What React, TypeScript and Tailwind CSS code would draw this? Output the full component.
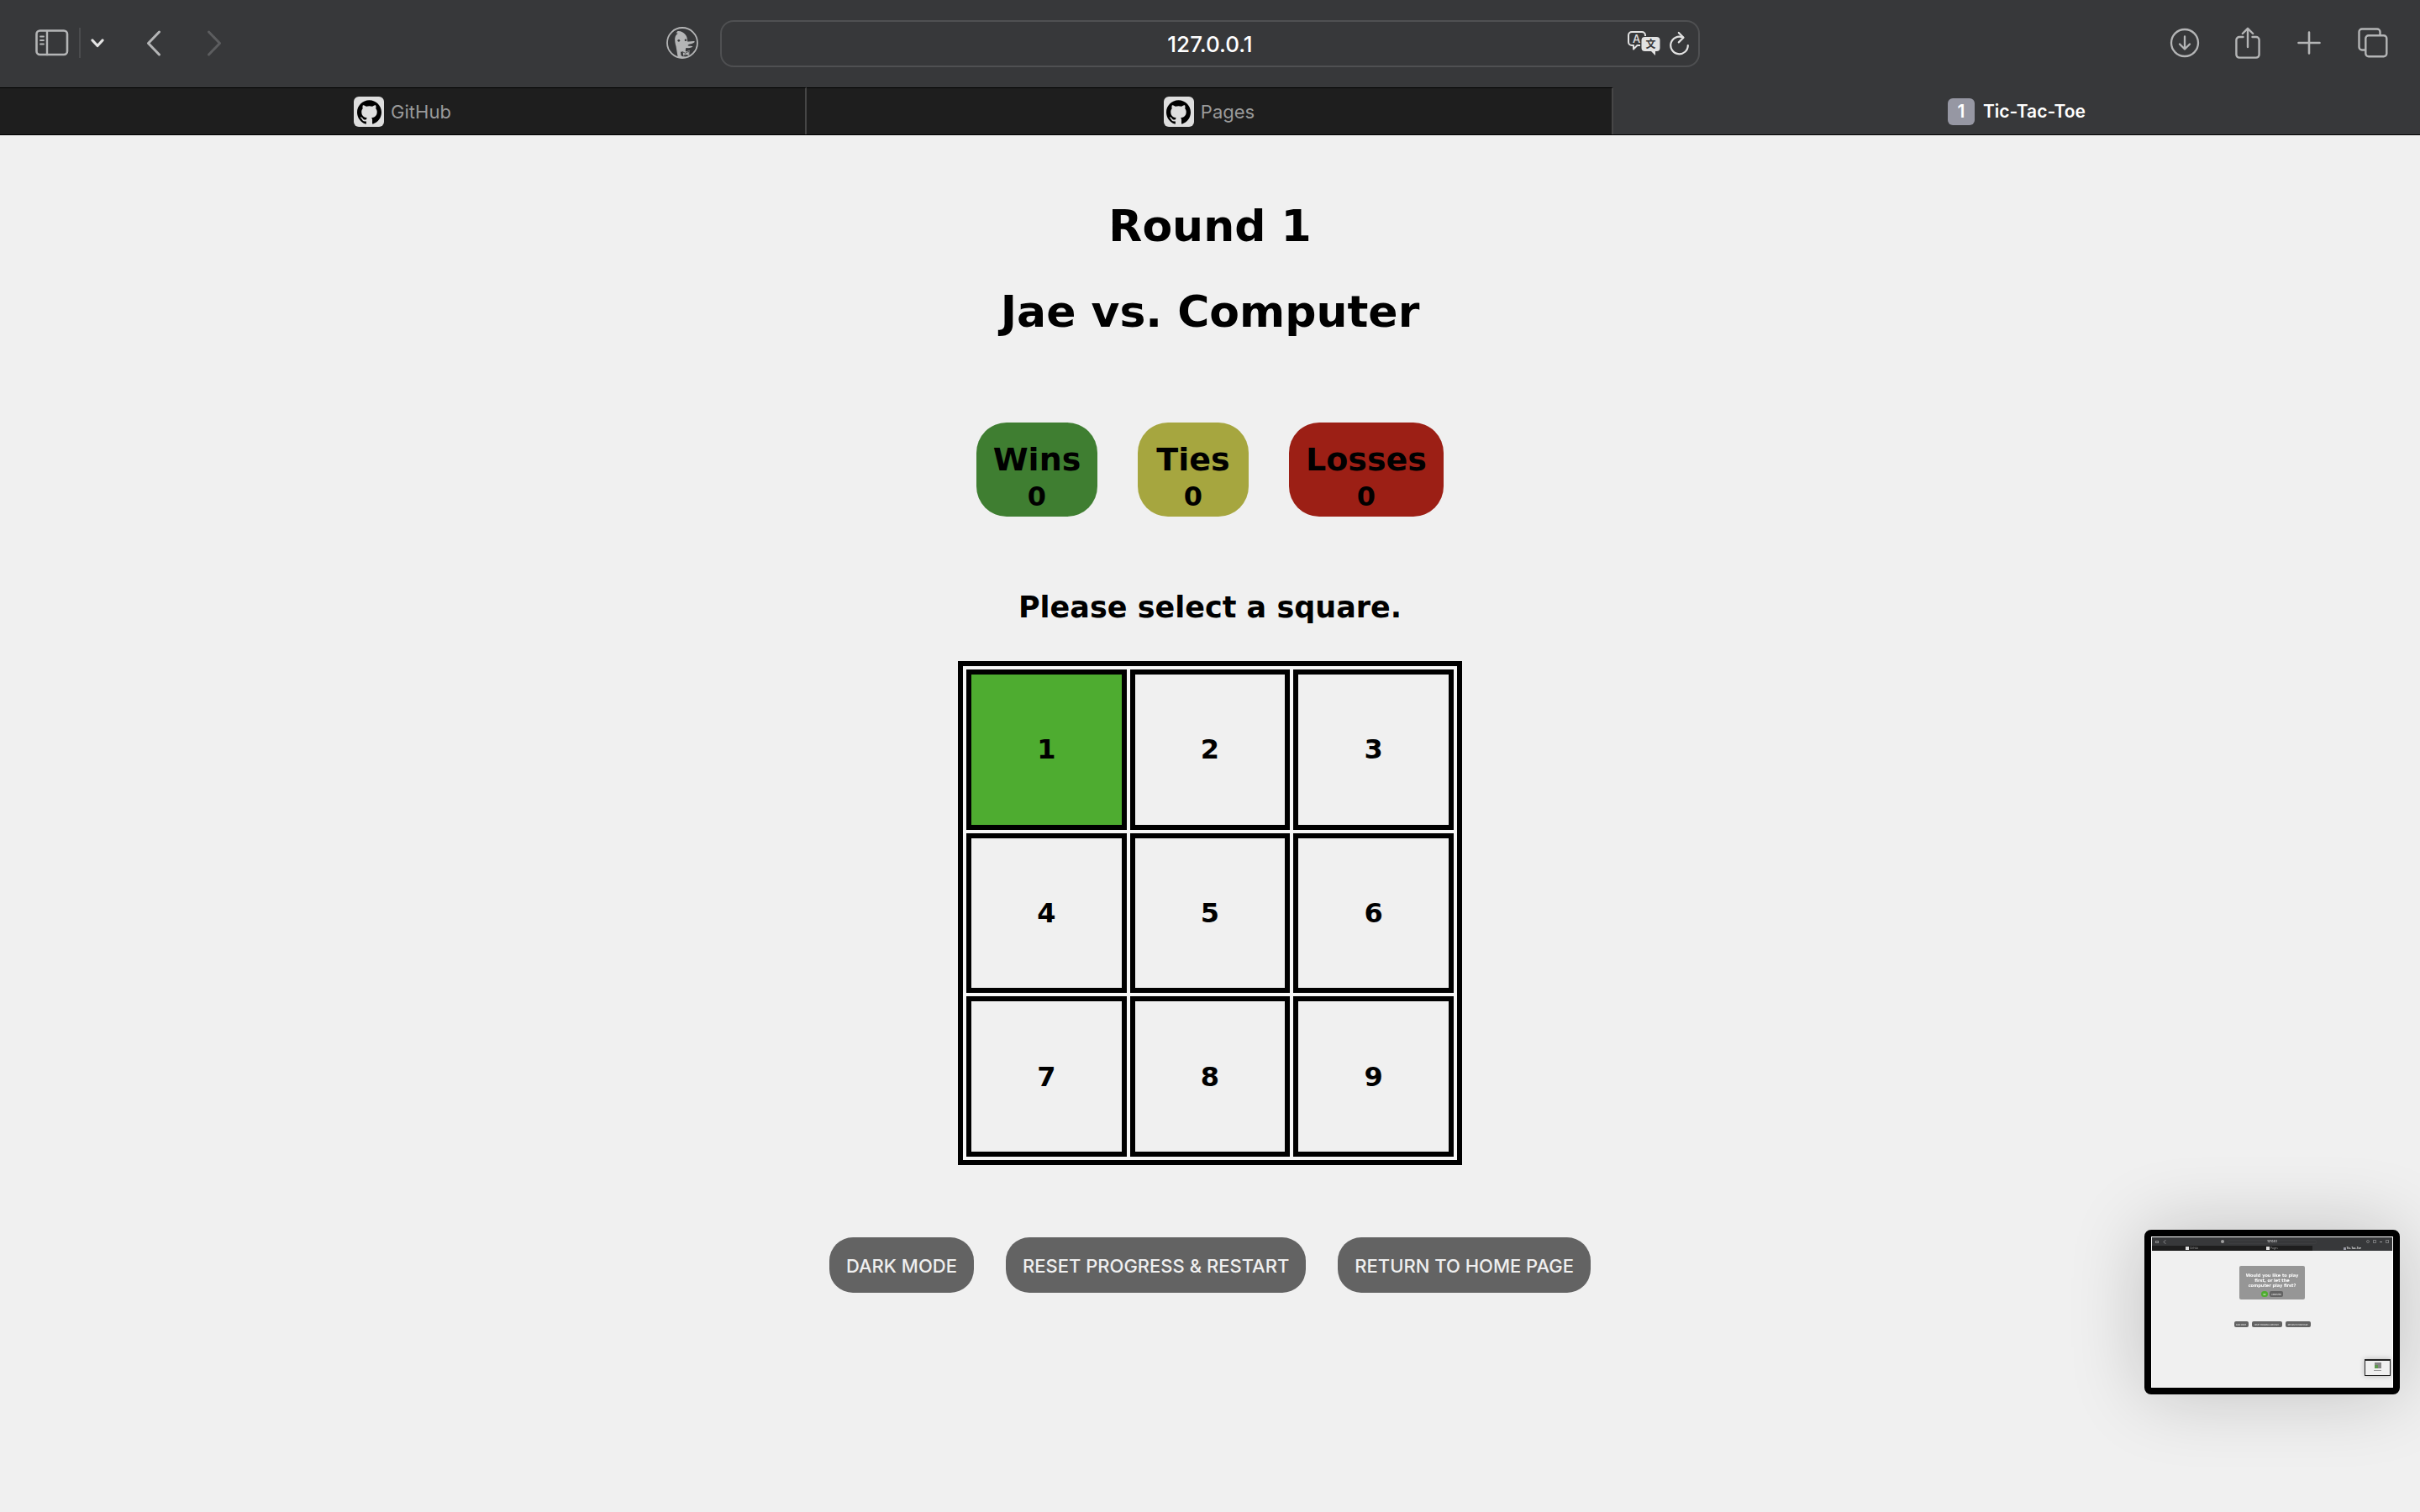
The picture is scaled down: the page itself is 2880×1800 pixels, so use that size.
import type { ReactNode } from "react";
import { SiGithub } from "react-icons/si";

const FONT_UI = "font-['Inter','Roboto',sans-serif]";
const FONT_GAME = "font-['DejaVu_Sans',sans-serif]";

function SidebarIcon() {
  return (
    <svg width="40" height="32" viewBox="0 0 40 32" fill="none" stroke="currentColor" strokeLinecap="round">
      <rect x="1.5" y="1.5" width="36.5" height="28.5" rx="4" strokeWidth="2.6" />
      <path d="M14 2v28" strokeWidth="2.4" />
      <path d="M6 8.5h4M6 13h4M6 17.500h4" strokeWidth="1.8" />
    </svg>
  );
}

function DuckIcon() {
  return (
    <svg width="38" height="38" viewBox="0 0 38 38" fill="none">
      <defs>
        <clipPath id="duck-clip">
          <circle cx="19" cy="19" r="18" />
        </clipPath>
      </defs>
      <g clipPath="url(#duck-clip)">
        <path
          d="M14 38 L11.500 23 C10 18 9.500 13 11.500 10 C12.500 8.500 13.500 8 14 8 C13 7.500 12 7.300 11.500 7.300 C12 6.400 13 6 13.500 6 C13 5.500 12.800 5.300 12.500 5.200 C17 4.600 20.500 6.500 22.500 9 C24.500 11 25 14 25.200 17.500 C28 18 31 16.800 33.500 17.200 C34.600 18.200 31.500 19.600 28 20.600 C26 21.200 25 22 26 22.600 C28 23.200 30 22.600 31.500 23.300 C31 24.800 27 25.500 23.500 25 C22.600 27 22.800 28.300 23 29.500 L27.500 28 L28 35 L23 33.500 L20 35 L19.500 30 L17 29.500 L18 38 Z"
          fill="currentColor"
        />
        <path d="M17 38 V34 C21 36 26 36.500 30 34 V38 Z" fill="currentColor" />
        <path d="M19 29.500l3.500 1.800 4.500-2.300.5 5.500-5-1.500-3 1.800z" stroke="#37383a" strokeWidth="0.8" />
      </g>
      <circle cx="14.800" cy="16.300" r="1.400" fill="#37383a" />
      <circle cx="23" cy="15.800" r="1.300" fill="#37383a" />
      <circle cx="19" cy="19" r="18" stroke="currentColor" strokeWidth="1.800" />
    </svg>
  );
}

function TranslateIcon() {
  return (
    <svg width="40" height="30" viewBox="0 0 40 30" fill="none">
      <path
        d="M15 17h-3.500L7 21.500V17H5a4 4 0 0 1-4-4V5a4 4 0 0 1 4-4h12a4 4 0 0 1 4 4v1"
        stroke="currentColor"
        strokeWidth="2"
        strokeLinejoin="round"
      />
      <text x="10.500" y="13.800" textAnchor="middle" fontSize="13" fontWeight="500" fontFamily="Inter, sans-serif" fill="currentColor">
        A
      </text>
      <path d="M20.500 7H34.500a4 4 0 0 1 4 4v9a4 4 0 0 1-4 4H33v5l-5-5h-7.500a4 4 0 0 1-4-4v-9a4 4 0 0 1 4-4z" fill="currentColor" />
      <text x="27.500" y="20" textAnchor="middle" fontSize="12" fontWeight="700" fontFamily="'Noto Sans CJK SC', sans-serif" fill="#37383a">
        文
      </text>
    </svg>
  );
}

function ReloadIcon() {
  return (
    <svg width="24" height="30" viewBox="0 0 24 30" fill="none" stroke="currentColor" strokeWidth="2.200" strokeLinecap="round" strokeLinejoin="round">
      <path d="M21.800 17A10.300 10.300 0 1 1 15.500 7.500" />
      <path d="M10.800 2l5.700 5.700-5.700 5.700" />
    </svg>
  );
}

function DownloadIcon() {
  return (
    <svg width="36" height="36" viewBox="0 0 36 36" fill="none" stroke="currentColor" strokeWidth="2.300" strokeLinecap="round" strokeLinejoin="round">
      <circle cx="18" cy="18" r="16" />
      <path d="M18 10.500v15M12 19.500l6 6 6-6" />
    </svg>
  );
}

function ShareIcon() {
  return (
    <svg width="30" height="38" viewBox="0 0 30 38" fill="none" stroke="currentColor" strokeWidth="2.400" strokeLinecap="round" strokeLinejoin="round">
      <path d="M9.500 12H5a3.600 3.600 0 0 0-3.600 3.600V33A3.600 3.600 0 0 0 5 36.600h20a3.600 3.600 0 0 0 3.600-3.600V15.600A3.600 3.600 0 0 0 25 12h-4.500" />
      <path d="M15 24V2M8.800 8L15 1.800 21.200 8" />
    </svg>
  );
}

function PlusIcon() {
  return (
    <svg width="28" height="28" viewBox="0 0 28 28" fill="none" stroke="currentColor" strokeWidth="2.600" strokeLinecap="round">
      <path d="M14 1.500v25M1.500 14h25" />
    </svg>
  );
}

function TabsIcon() {
  return (
    <svg width="36" height="36" viewBox="0 0 36 36" fill="none" stroke="currentColor" strokeWidth="2.400">
      <rect x="9.300" y="9.300" width="25" height="25" rx="3.500" />
      <path d="M9.300 26.500H5A3.500 3.500 0 0 1 1.500 23V5A3.500 3.500 0 0 1 5 1.500h18A3.500 3.500 0 0 1 26.500 5v4.300" />
    </svg>
  );
}

function Chevron({ d, width, height, stroke }: { d: string; width: number; height: number; stroke: number }) {
  return (
    <svg width={width} height={height} viewBox={`0 0 ${width} ${height}`} fill="none" stroke="currentColor" strokeWidth={stroke} strokeLinecap="round" strokeLinejoin="round">
      <path d={d} />
    </svg>
  );
}

function IconButton({ label, className = "", children }: { label: string; className?: string; children: ReactNode }) {
  return (
    <button type="button" aria-label={label} className={`shrink-0 ${className}`}>
      {children}
    </button>
  );
}

function Toolbar() {
  return (
    <div className="grid h-26 grid-cols-[857fr_1166fr_857fr] items-center text-[#b4b5b6]">
      <div className="flex items-center pb-[2px] pl-[42px]">
        <IconButton label="Show sidebar">
          <SidebarIcon />
        </IconButton>
        <span className="ml-3 h-9 w-[2px] bg-[#4b4c4e]" />
        <IconButton label="Sidebar menu" className="ml-3 text-[#e4e4e4]">
          <Chevron d="M2 2l6 6.500 6-6.500" width={16} height={11} stroke={3.2} />
        </IconButton>
        <IconButton label="Back" className="ml-[50px]">
          <Chevron d="M15.500 2L2.500 15.500l13 13.500" width={18} height={31} stroke={3} />
        </IconButton>
        <IconButton label="Forward" className="ml-[54px] text-[#5c5d5f]">
          <Chevron d="M2.500 2l13 13.500L2.500 29" width={18} height={31} stroke={3} />
        </IconButton>
        <IconButton label="Privacy report" className="mr-[26px] ml-auto">
          <DuckIcon />
        </IconButton>
      </div>
      <div className="relative h-14">
        <input
          aria-label="Address"
          defaultValue="127.0.0.1"
          className="h-full w-full rounded-2xl border-2 border-[#4f5052] bg-transparent text-center text-[26px] font-medium text-white outline-none"
        />
        <div className="absolute inset-y-0 right-3 flex items-center gap-[10px] text-[#e2e2e2]">
          <IconButton label="Translate">
            <TranslateIcon />
          </IconButton>
          <IconButton label="Reload">
            <ReloadIcon />
          </IconButton>
        </div>
      </div>
      <div className="flex items-center justify-end pr-[38px] pb-[2px]">
        <IconButton label="Downloads">
          <DownloadIcon />
        </IconButton>
        <IconButton label="Share" className="ml-[42px]">
          <ShareIcon />
        </IconButton>
        <IconButton label="New tab" className="ml-11">
          <PlusIcon />
        </IconButton>
        <IconButton label="Tab overview" className="ml-11">
          <TabsIcon />
        </IconButton>
      </div>
    </div>
  );
}

function TabBar() {
  return (
    <nav aria-label="Tabs" className="grid h-14 grid-cols-3 text-[22px]">
      {["GitHub", "Pages"].map((name) => (
        <button
          key={name}
          type="button"
          className="flex items-center justify-center gap-2 border-t border-r-2 border-t-black border-r-[#464646] bg-[#1e1e1e] pt-px text-[#9a9a9a]"
        >
          <span className="flex size-9 items-center justify-center rounded-md bg-[#dedede] text-black">
            <SiGithub size={29} />
          </span>
          {name}
        </button>
      ))}
      <button type="button" className="flex items-center justify-center gap-[10px] pt-[2px] text-[21px] font-semibold text-white">
        <span className="flex size-8 items-center justify-center rounded-md bg-[#9697a3]">1</span>
        Tic-Tac-Toe
      </button>
    </nav>
  );
}

const SCORES = [
  { label: "Wins", value: 0, box: "w-36 bg-[#3f7e31]" },
  { label: "Ties", value: 0, box: "w-33 bg-[#a6a63f]" },
  { label: "Losses", value: 0, box: "w-46 bg-[#9c1f15]" },
];

function Board() {
  return (
    <div className="grid size-150 grid-cols-3 grid-rows-3 gap-1 border-6 border-black bg-[#f6f6f6] p-1">
      {[1, 2, 3, 4, 5, 6, 7, 8, 9].map((n) => (
        <button
          key={n}
          type="button"
          className={`border-6 border-black text-[32px] font-bold ${n === 1 ? "bg-[#4eac30]" : "bg-[#f0f0f0]"}`}
        >
          {n}
        </button>
      ))}
    </div>
  );
}

function Thumbnail() {
  return (
    <aside
      aria-label="Recent capture"
      className="fixed right-6 bottom-35 flex h-49 w-76 flex-col rounded-lg border-8 border-black bg-[#f0f0f0] shadow-[0_0_90px_rgba(0,0,0,0.2)]"
    >
      <div className={`relative flex flex-1 flex-col border border-white text-[3px] leading-none ${FONT_UI}`}>
        <div className="grid h-[10px] grid-cols-[4fr_5fr_4fr] items-center bg-[#37383a] px-1 text-[#b4b5b6]">
          <div className="flex items-center gap-[5px]">
            <span className="h-[3px] w-1 border border-[#8a8b8c]" />
            <Chevron d="M3 .5L1 2.500l2 2" width={4} height={5} stroke={0.7} />
            <span className="mr-1 ml-auto size-1 rounded-full bg-[#a0a0a0]" />
          </div>
          <div className="flex items-center justify-center rounded-xs border border-[#3d3e40] text-white">127.0.0.1</div>
          <div className="flex items-center justify-end gap-1">
            <span className="size-1 rounded-full border border-[#77787a]" />
            <span className="size-1 border border-[#77787a]" />
            <span className="h-px w-[3px] bg-[#9a9b9c]" />
            <span className="size-1 border border-[#77787a]" />
          </div>
        </div>
        <div className="grid h-[6px] grid-cols-3 text-[#9a9a9a]">
          {["GitHub", "Pages"].map((name) => (
            <span key={name} className="flex items-center justify-center gap-px bg-[#1e1e1e]">
              <span className="size-1 bg-[#dedede]" />
              {name}
            </span>
          ))}
          <span className="flex items-center justify-center gap-px bg-[#37383a] font-semibold text-white">
            <span className="size-[3px] bg-[#9697a3]" />
            Tic-Tac-Toe
          </span>
        </div>
        <div className="mx-auto mt-[18px] flex h-10 w-[78px] flex-col items-center justify-between rounded-xs bg-[#969696] pt-2 pb-[3px]">
          <p className={`text-center text-[5px] leading-[6px] font-bold whitespace-nowrap text-white ${FONT_GAME}`}>
            Would you like to play
            <br />
            first, or let the
            <br />
            computer play first?
          </p>
          <div className="flex gap-[2px] text-[2px] text-white">
            <span className="flex h-[7px] w-2 items-center justify-center rounded-full bg-[#4eac30]">ME</span>
            <span className="flex h-[7px] w-4 items-center justify-center rounded-xs bg-[#636363]">COMPUTER</span>
          </div>
        </div>
        <div className="mt-[26px] flex justify-center gap-1 text-[2px] text-[#efefef]">
          <span className="flex h-[7px] w-[17px] items-center justify-center rounded-xs bg-[#636363]">DARK MODE</span>
          <span className="flex h-[7px] w-9 items-center justify-center rounded-xs bg-[#636363]">RESET PROGRESS &amp; RESTART</span>
          <span className="flex h-[7px] w-[30px] items-center justify-center rounded-xs bg-[#636363]">RETURN TO HOME PAGE</span>
        </div>
        <div className="absolute right-[2px] bottom-[13px] flex h-5 w-[31px] flex-col items-center border border-t-2 border-[#222] bg-[#efefef] shadow-[0_0_6px_rgba(0,0,0,0.25)]">
          <span className="mt-[2px] flex h-[7px] w-2 items-end bg-[#888]">
            <span className="size-1 bg-[#5f9a50]" />
          </span>
          <span className="mt-[2px] h-px w-[9px] bg-[#999]" />
        </div>
      </div>
    </aside>
  );
}

export default function App() {
  return (
    <div className="min-h-screen bg-[#f0f0f0] text-black">
      <header className={`border-b border-black bg-[#37383a] ${FONT_UI}`}>
        <Toolbar />
        <TabBar />
      </header>
      <main className={`flex flex-col items-center ${FONT_GAME}`}>
        <h1 className="mt-[76px] text-[52px] leading-[64px] font-bold">Round 1</h1>
        <h1 className="mt-[38px] text-[52px] leading-[64px] font-bold">Jae vs. Computer</h1>
        <section aria-label="Score" className="mt-[100px] flex gap-12">
          {SCORES.map((s) => (
            <div key={s.label} className={`flex h-28 flex-col items-center rounded-[36px] pt-6 leading-10 font-bold ${s.box}`}>
              <span className="text-[38px]">{s.label}</span>
              <span className="pt-1 text-[32px]">{s.value}</span>
            </div>
          ))}
        </section>
        <h2 className="mt-[84px] text-[35px] leading-12 font-bold">Please select a square.</h2>
        <div className="mt-10">
          <Board />
        </div>
        <div className={`mt-[86px] flex gap-[38px] text-[22px] text-[#efefef] ${FONT_UI}`}>
          {["DARK MODE", "RESET PROGRESS & RESTART", "RETURN TO HOME PAGE"].map((label) => (
            <button key={label} type="button" className="h-[66px] rounded-[28px] bg-[#636363] px-5 pt-[2px] font-medium">
              {label}
            </button>
          ))}
        </div>
      </main>
      <Thumbnail />
    </div>
  );
}
